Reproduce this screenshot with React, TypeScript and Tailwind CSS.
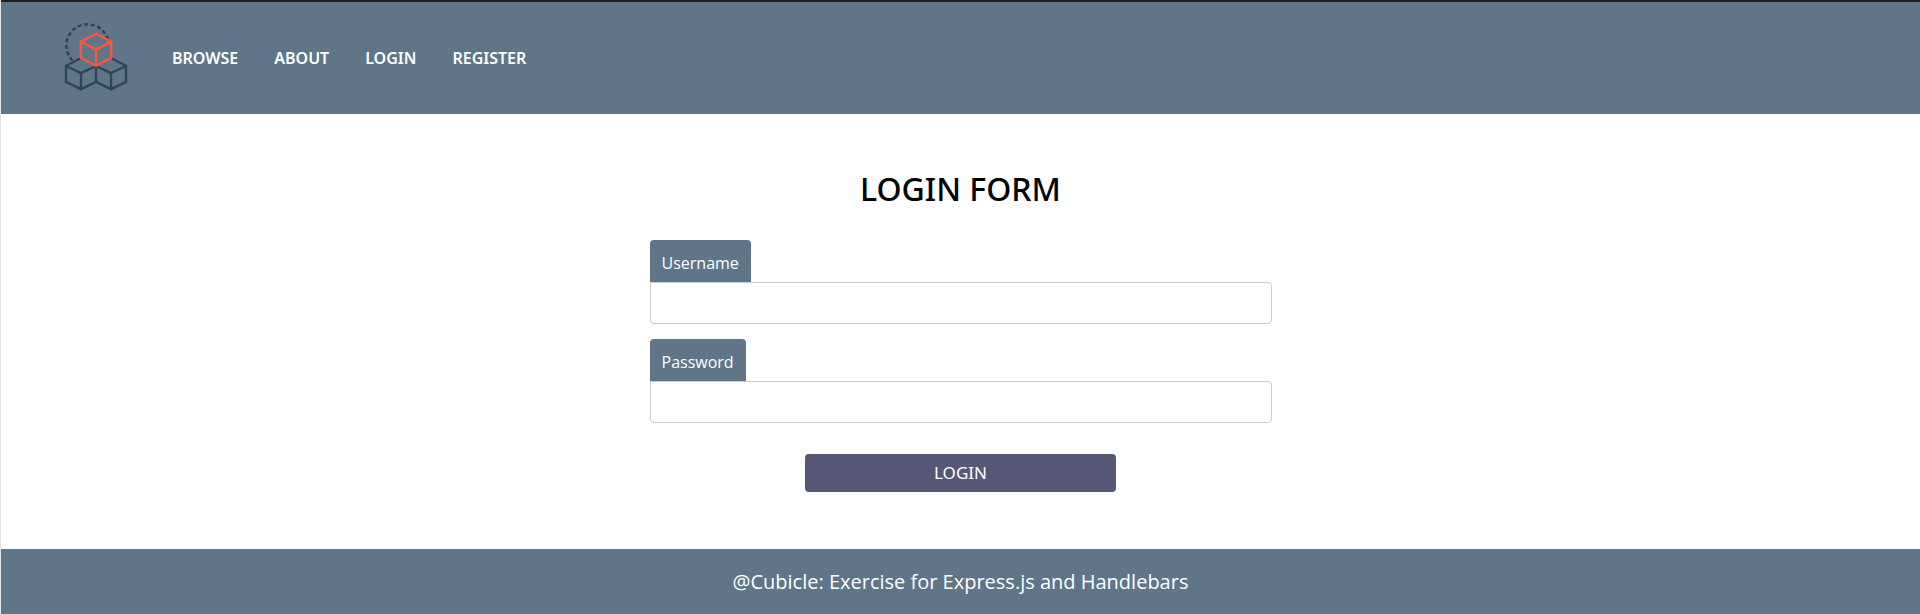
import React from "react";

function Logo() {
  return (
    <svg viewBox="0 0 64 72" className="h-[72px] w-16" fill="none" strokeWidth="2.4" strokeLinejoin="round" strokeLinecap="round" aria-label="Cubicle" role="img">
      <g stroke="#2c4559">
        <path d="M8.4 38.4A21.2 21.2 0 1 1 43.8 17.4" strokeDasharray="4 2.6" strokeLinecap="butt" />
        <path d="M16.5 36.2 2 44V59.8L17 67.2 32 59.8 47 67.2 62 59.8V44L47.5 36.2" />
        <path d="M2 44 17 51.2 32 44 47 51.2 62 44M17 51.2V67.2M32 44V59.8M47 51.2V67.2" />
      </g>
      <g stroke="#fd543f">
        <path d="M32 11.8 47.2 19.6V36L32 43.8 16.8 36V19.6Z" />
        <path d="M16.8 19.6 32 27.6 47.2 19.6M32 27.6V43.8" />
      </g>
    </svg>
  );
}

const links = ["Browse", "About", "Login", "Register"];

function Field({ id, label, type }: { id: string; label: string; type: string }) {
  return (
    <div className="flex flex-col items-start">
      <label htmlFor={id} className="rounded-t bg-[#607588] px-3 pt-[11px] pb-[7px] text-base leading-6 text-white">
        {label}
      </label>
      <input id={id} name={id} type={type} className="h-[42px] w-full rounded-b rounded-tr border border-[#cccccc] bg-white px-3 outline-none" />
    </div>
  );
}

export default function App() {
  return (
    <div className="flex min-h-screen flex-col border-l border-[#e4e4e4] bg-white font-['Open_Sans','Noto_Sans',sans-serif]">
      <header className="flex h-[114px] items-center gap-11 border-t-2 border-[#222222] bg-[#607588] pl-[63px] font-['Noto_Sans','Open_Sans',sans-serif]">
        <a href="#home"><Logo /></a>
        <nav className="flex gap-9">
          {links.map((link) => (
            <a key={link} href={"#" + link.toLowerCase()} className="text-base font-semibold text-white uppercase">
              {link}
            </a>
          ))}
        </nav>
      </header>
      <main className="flex grow flex-col items-center pt-[51px]">
        <h1 className="font-['Noto_Sans','Open_Sans',sans-serif] text-[32px] leading-12 font-medium text-black">LOGIN FORM</h1>
        <form className="mt-[27px] flex w-[622px] max-w-full flex-col gap-[15px]">
          <Field id="username" label="Username" type="text" />
          <Field id="password" label="Password" type="password" />
          <button type="button" className="mt-4 h-[38px] w-1/2 self-center rounded bg-[#555775] font-['Noto_Sans','Open_Sans',sans-serif] text-[17px] text-white">
            LOGIN
          </button>
        </form>
      </main>
      <footer className="flex h-[65px] items-center justify-center bg-[#607588] text-xl text-white">
        <p>@Cubicle: Exercise for Express.js and Handlebars</p>
      </footer>
    </div>
  );
}
